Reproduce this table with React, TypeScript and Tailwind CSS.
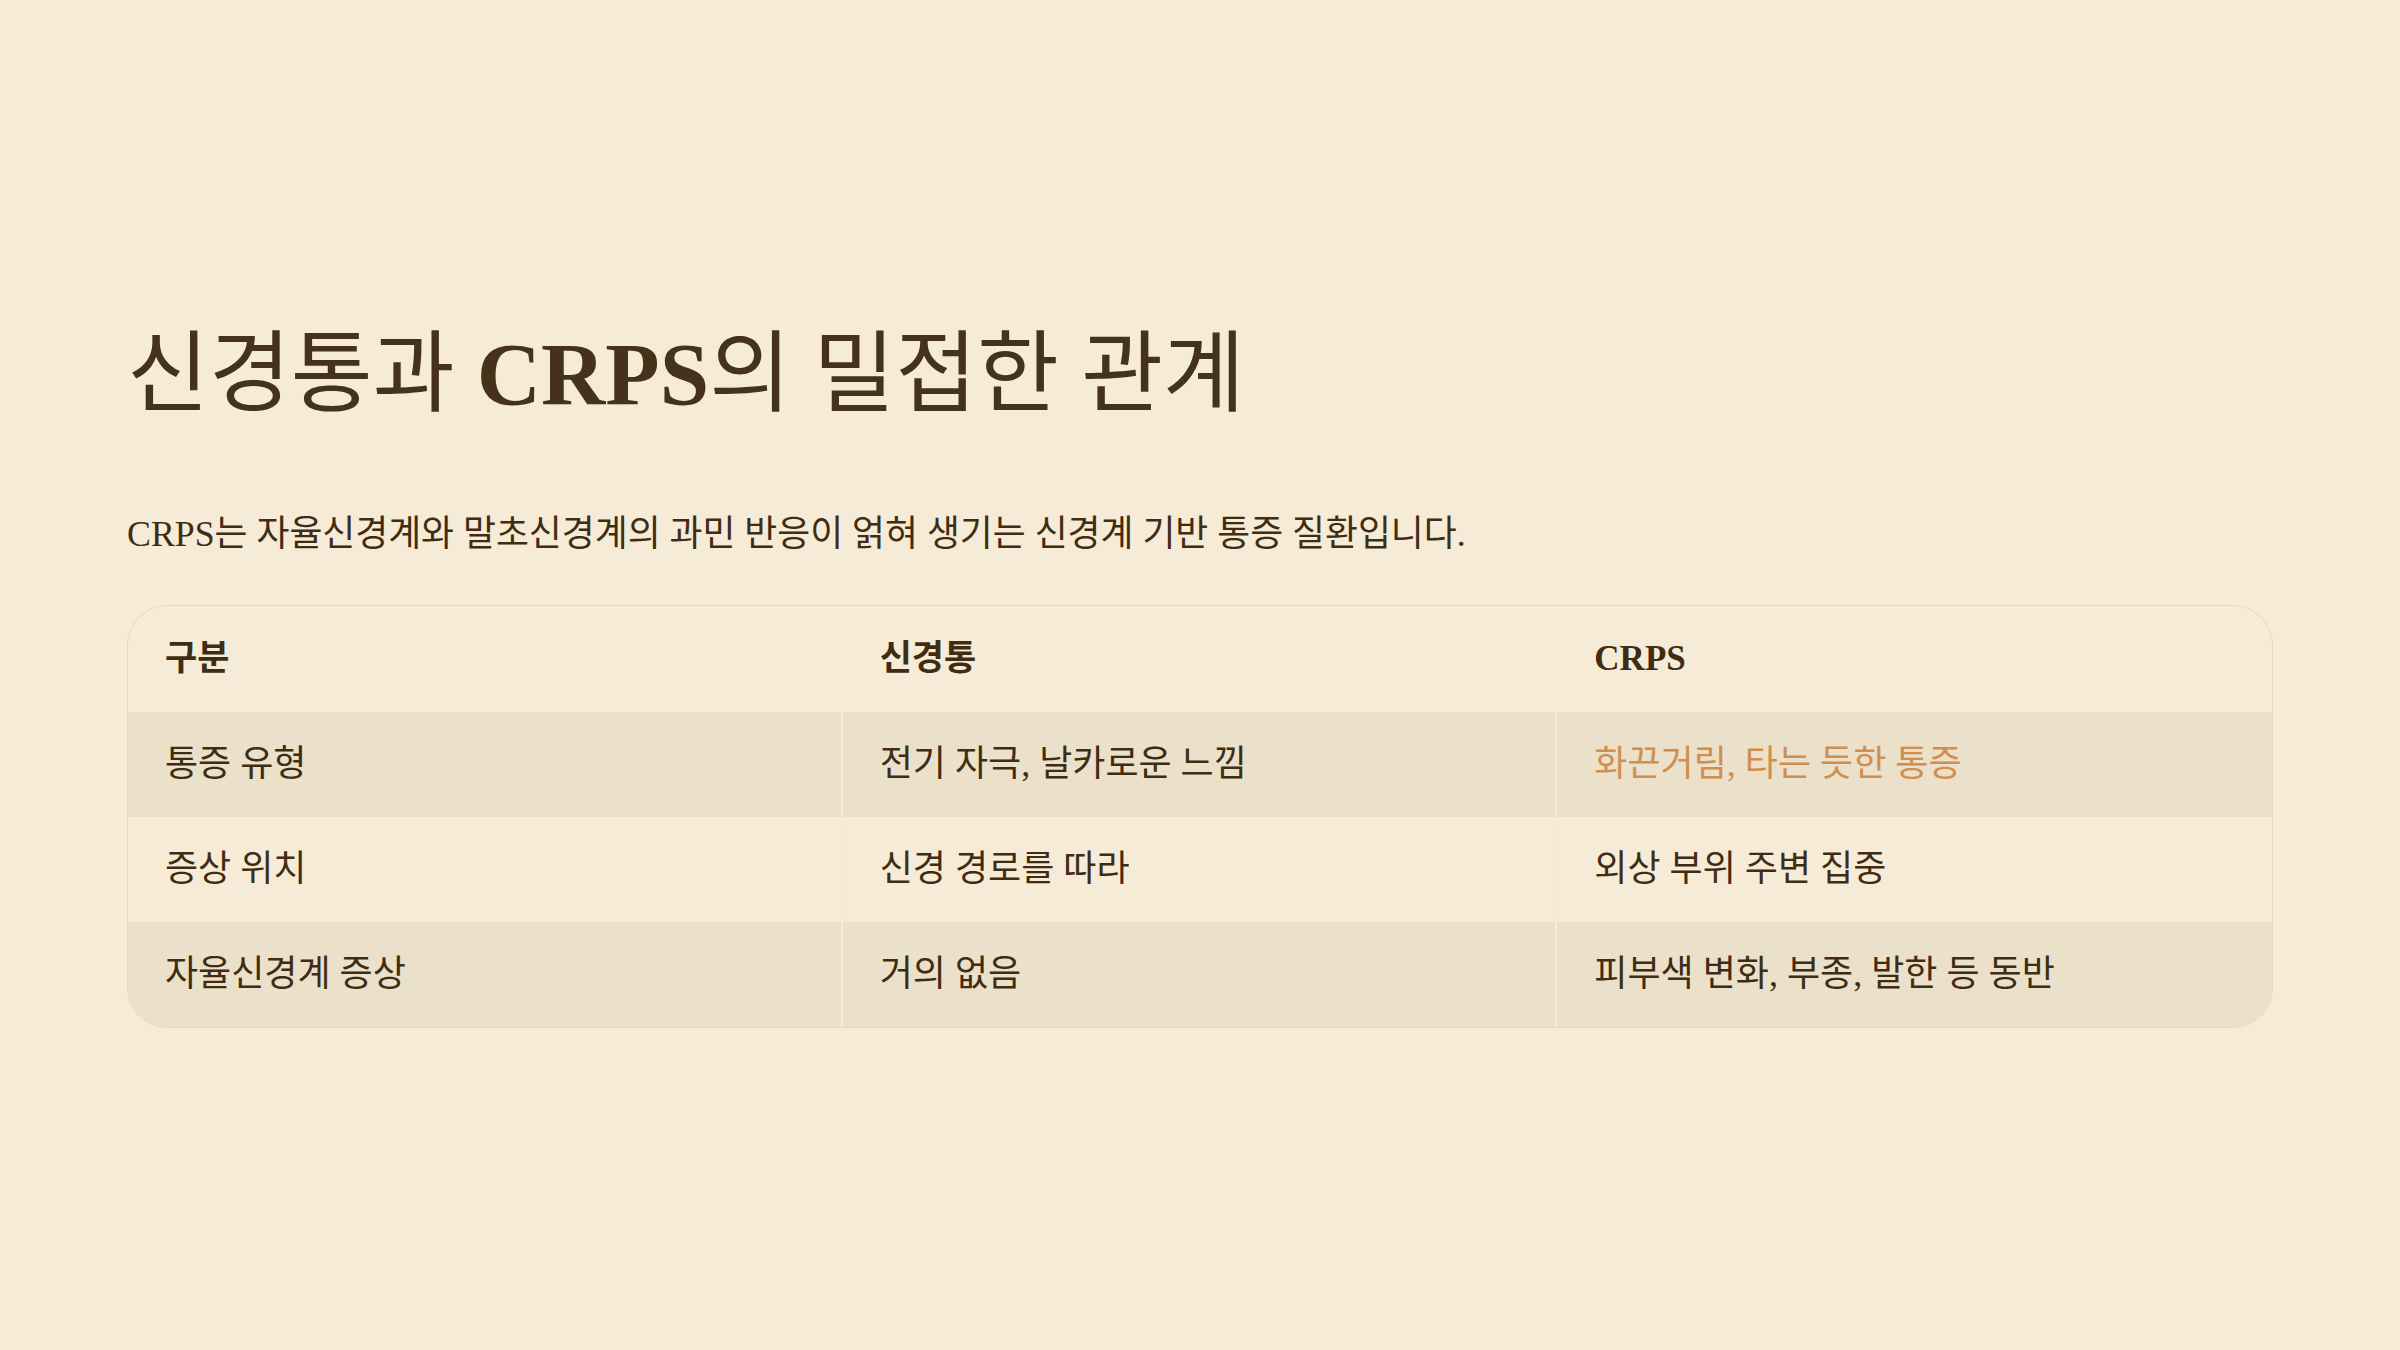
const rows = [
  { label: "통증 유형", nerve: "전기 자극, 날카로운 느낌", crps: "화끈거림, 타는 듯한 통증", highlight: true },
  { label: "증상 위치", nerve: "신경 경로를 따라", crps: "외상 부위 주변 집중" },
  { label: "자율신경계 증상", nerve: "거의 없음", crps: "피부색 변화, 부종, 발한 등 동반" },
];

const font = { fontFamily: '"Liberation Serif", "Noto Sans CJK KR", serif' };

export default function App() {
  return (
    <div
      className="min-h-screen bg-[#f6ebd6] text-[#3f2d13] flex flex-col justify-center px-[127px] pt-[8px]"
      style={font}
    >
      <h1 className="text-[89px] leading-none font-normal text-[#45321a] mb-[98px]">
        신경통과 <span className="font-bold">CRPS</span>의 밀접한 관계
      </h1>
      <p className="text-[35.8px] leading-none mb-[52px]">
        CRPS는 자율신경계와 말초신경계의 과민 반응이 얽혀 생기는 신경계 기반 통증 질환입니다.
      </p>

      <div className="rounded-[40px] border border-[#e3d8c2] overflow-hidden">
        <div className="grid grid-cols-3 h-[106px]">
          {["구분", "신경통", "CRPS"].map((h) => (
            <div key={h} className="flex items-center px-[37px] text-[35px] font-bold">
              {h}
            </div>
          ))}
        </div>
        {rows.map((r, i) => (
          <div
            key={r.label}
            className={
              i % 2 === 0
                ? "grid grid-cols-3 h-[105px] bg-[#ebe0ca]"
                : "grid grid-cols-3 h-[105px] bg-[#f6ebd6]"
            }
          >
            <div className="flex items-center px-[37px] text-[36px] border-r-2 border-[#f5ead5]">
              {r.label}
            </div>
            <div className="flex items-center px-[37px] text-[36px] border-r-2 border-[#f5ead5]">
              {r.nerve}
            </div>
            <div
              className={
                r.highlight
                  ? "flex items-center px-[37px] text-[36px] text-[#d08f4f]"
                  : "flex items-center px-[37px] text-[36px]"
              }
            >
              {r.crps}
            </div>
          </div>
        ))}
      </div>
    </div>
  );
}
